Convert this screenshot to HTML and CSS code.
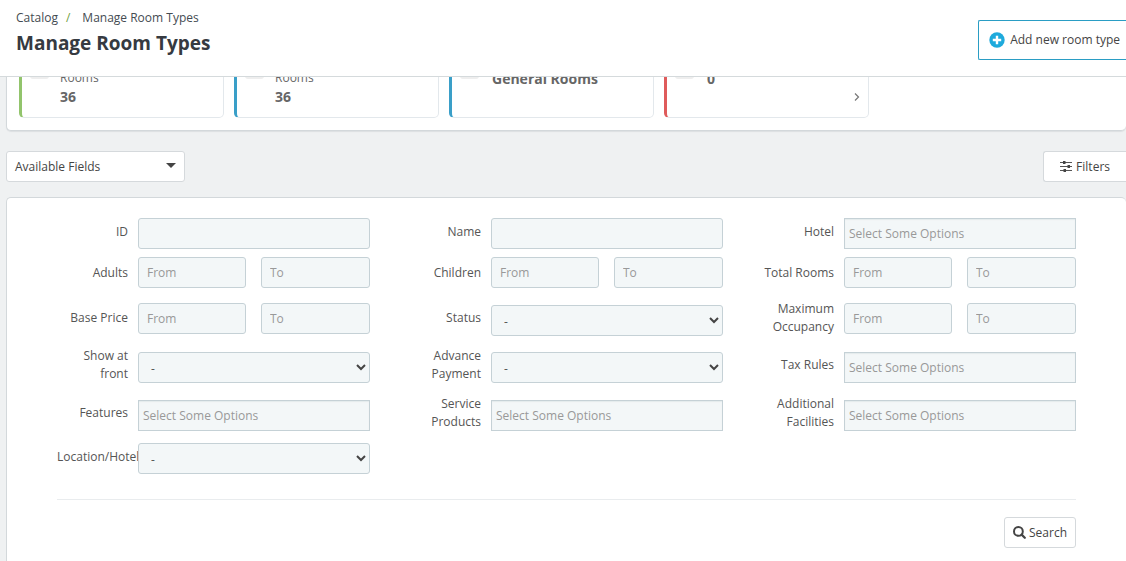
FILE: index.html
```html
<!DOCTYPE html>
<html lang="en">
<head>
<meta charset="utf-8">
<title>Manage Room Types</title>
<link rel="stylesheet" href="styles.css">
</head>
<body>
<header class="page-head">
  <div>
    <nav class="breadcrumb" aria-label="Breadcrumb"><a href="#">Catalog</a><span class="slash">/</span><a href="#">Manage Room Types</a></nav>
    <h1 class="title">Manage Room Types</h1>
  </div>
  <button class="add-btn" type="button">
    <svg width="16" height="16" viewBox="0 0 16 16" aria-hidden="true"><circle cx="8" cy="8" r="7.7" fill="#1eaadc"/><path d="M8 3.8v8.4M3.8 8h8.4" stroke="#fff" stroke-width="2.4"/></svg>
    Add new room type
  </button>
</header>
<main class="content">
  <section class="panel kpis">
    <article class="kpi green"><span class="kpi-icon"></span><div class="kpi-text"><span>Rooms</span><strong>36</strong></div></article>
    <article class="kpi blue"><span class="kpi-icon"></span><div class="kpi-text"><span>Rooms</span><strong>36</strong></div></article>
    <article class="kpi blue"><span class="kpi-icon"></span><div class="kpi-text plain"><strong>General Rooms</strong></div></article>
    <article class="kpi red"><span class="kpi-icon"></span><div class="kpi-text plain"><strong>0</strong></div>
      <svg class="kpi-more" width="6" height="10" viewBox="0 0 6 10" aria-hidden="true"><path d="M1 1.5l3.5 3.5L1 8.5" fill="none" stroke="#777" stroke-width="1.2"/></svg></article>
  </section>

  <div class="toolbar">
    <button class="btn fields-btn" type="button">Available Fields
      <svg class="caret" width="10" height="5" viewBox="0 0 10 5" aria-hidden="true"><path d="M0 0h10L5 5z" fill="#444"/></svg></button>
    <button class="btn filters-btn" type="button">
      <svg width="12" height="12" viewBox="0 0 12 12" aria-hidden="true"><path d="M0 1.5h12M0 5.5h12M0 9.5h12" stroke="#555" stroke-width="1"/><path d="M3 0h2.5v3H3zM7.500 4H10v3H7.500zM3.500 8H6v3H3.500z" fill="#444"/></svg>
      Filters</button>
  </div>

  <form class="panel filters">
    <div class="row">
      <div class="field raised"><label for="id">ID</label><input class="ctl" id="id" type="text"></div>
      <div class="field raised"><label for="name">Name</label><input class="ctl" id="name" type="text"></div>
      <div class="field raised"><label for="hotel">Hotel</label><input class="ctl multi" id="hotel" type="text" placeholder="Select Some Options"></div>
    </div>
    <div class="row">
      <div class="field"><label for="adults">Adults</label><div class="range"><input class="ctl" id="adults" type="text" placeholder="From"><input class="ctl" type="text" placeholder="To" aria-label="Adults to"></div></div>
      <div class="field"><label for="children">Children</label><div class="range"><input class="ctl" id="children" type="text" placeholder="From"><input class="ctl" type="text" placeholder="To" aria-label="Children to"></div></div>
      <div class="field"><label for="rooms">Total Rooms</label><div class="range"><input class="ctl" id="rooms" type="text" placeholder="From"><input class="ctl" type="text" placeholder="To" aria-label="Total rooms to"></div></div>
    </div>
    <div class="row spaced">
      <div class="field"><label for="price">Base Price</label><div class="range"><input class="ctl" id="price" type="text" placeholder="From"><input class="ctl" type="text" placeholder="To" aria-label="Base price to"></div></div>
      <div class="field low"><label for="status">Status</label><select class="ctl" id="status"><option>-</option></select></div>
      <div class="field"><label for="occupancy">Maximum Occupancy</label><div class="range"><input class="ctl" id="occupancy" type="text" placeholder="From"><input class="ctl" type="text" placeholder="To" aria-label="Maximum occupancy to"></div></div>
    </div>
    <div class="row spaced">
      <div class="field raised"><label for="front">Show at front</label><select class="ctl" id="front"><option>-</option></select></div>
      <div class="field raised"><label for="advance">Advance Payment</label><select class="ctl" id="advance"><option>-</option></select></div>
      <div class="field raised"><label for="tax">Tax Rules</label><input class="ctl multi" id="tax" type="text" placeholder="Select Some Options"></div>
    </div>
    <div class="row">
      <div class="field raised"><label for="features">Features</label><input class="ctl multi" id="features" type="text" placeholder="Select Some Options"></div>
      <div class="field raised"><label for="products">Service Products</label><input class="ctl multi" id="products" type="text" placeholder="Select Some Options"></div>
      <div class="field raised"><label for="facilities">Additional Facilities</label><input class="ctl multi" id="facilities" type="text" placeholder="Select Some Options"></div>
    </div>
    <div class="row">
      <div class="field raised wide-label"><label for="location">Location/Hotel</label><select class="ctl" id="location"><option>-</option></select></div>
    </div>
    <div class="actions">
      <button class="btn search-btn" type="button">
        <svg width="13" height="13" viewBox="0 0 13 13" aria-hidden="true"><circle cx="5.4" cy="5.4" r="4.400" fill="none" stroke="#444" stroke-width="2"/><path d="M8.600 8.600l3.200 3.200" stroke="#444" stroke-width="2.200" stroke-linecap="round"/></svg>
        Search</button>
    </div>
  </form>
</main>
</body>
</html>
```
FILE: styles.css
```css
* { box-sizing: border-box; }

body {
  display: flex;
  flex-direction: column;
  min-height: 100vh;
  margin: 0;
  background: #eff1f2;
  color: #555;
  font: 12px/18px "Open Sans", "Noto Sans", sans-serif;
}

button, input, select { font: inherit; color: inherit; }

.page-head {
  position: sticky;
  top: 0;
  z-index: 2;
  display: flex;
  flex-shrink: 0;
  justify-content: space-between;
  align-items: flex-start;
  height: 77px;
  padding: 9px 0 0 16px;
  background: #fff;
  border-bottom: 1px solid #d5dadc;
}

.breadcrumb a { color: #444b52; text-decoration: none; }
.breadcrumb .slash { margin: 0 12px 0 8px; color: #72a143; }

.title {
  margin: 3px 0 0;
  color: #363a41;
  font-size: 19px;
  line-height: 26px;
  font-weight: 700;
}

.add-btn {
  display: flex;
  align-items: center;
  gap: 5px;
  height: 40px;
  margin-top: 11px;
  padding: 0 6px 0 10px;
  background: #fff;
  border: 1px solid #2a9dc4;
  border-right: 0;
  border-radius: 2px 0 0 2px;
  color: #444;
}

.content {
  display: flex;
  flex: 1;
  flex-direction: column;
  padding-left: 6px;
}

.panel {
  background: #fff;
  border: 1px solid #d3d8db;
  border-right: 0;
  border-radius: 5px;
}

.kpis {
  display: flex;
  gap: 10px;
  margin-top: -36px;
  padding: 12px;
  box-shadow: 0 1px 1px #dcdfe1;
}

.kpi {
  display: flex;
  flex: 0 0 205px;
  gap: 11px;
  height: 64px;
  padding: 14px 8px 0;
  border: 1px solid #e3e8ec;
  border-left-width: 3px;
  border-radius: 5px;
}
.kpi.green { border-left-color: #92c46c; }
.kpi.blue { border-left-color: #3a9fc8; }
.kpi.red { border-left-color: #df5b5b; }

.kpi-icon { width: 19px; height: 10px; background: #eee; border-radius: 3px; }
.kpi-text { display: flex; flex: 1; flex-direction: column; color: #666; }
.kpi-text.plain { padding-left: 2px; }
.kpi-text strong { font-size: 14px; line-height: 19px; }
.kpi-more { align-self: flex-end; margin-bottom: 15px; }

.toolbar {
  display: flex;
  justify-content: space-between;
  padding: 20px 0 15px;
}

.btn {
  display: flex;
  align-items: center;
  gap: 4px;
  height: 31px;
  padding: 0 8px;
  background: #fff;
  border: 1px solid #d5d9dc;
  border-radius: 3px;
  color: #444;
}
.search-btn { gap: 3px; }
.fields-btn { justify-content: space-between; width: 179px; }
.caret { margin-bottom: 2px; }
.filters-btn { padding: 0 16px; border-right: 0; border-radius: 3px 0 0 3px; }

.filters {
  flex: 1;
  padding: 20px 50px 12px;
  border-bottom: 0;
  border-radius: 5px 5px 0 0;
}

.row {
  display: grid;
  grid-template-columns: repeat(3, minmax(0, 1fr));
  gap: 40px;
  margin-bottom: 8px;
}
.row.spaced { margin-top: 12px; }
.row.spaced + .row.spaced { margin-top: 11px; }

.field {
  display: grid;
  grid-template-columns: 71px minmax(0, 1fr);
  gap: 10px;
  align-items: center;
}
.field label { text-align: right; }
.field.raised label { padding-bottom: 4px; }
.field.low { align-items: end; }
.field.low label { padding-bottom: 9px; }
.wide-label label { white-space: nowrap; text-align: left; }

.range {
  display: grid;
  grid-template-columns: minmax(0, 108fr) minmax(0, 109fr);
  gap: 15px;
}

.ctl {
  width: 100%;
  height: 31px;
  padding: 0 8px;
  background-color: #f3f7f8;
  border: 1px solid #c5d1d6;
  border-radius: 3px;
}
.ctl::placeholder { color: #999; opacity: 1; }
.ctl.multi { padding: 0 4px; border-radius: 0; box-shadow: inset 0 1px 1px #e4eaec; }

select.ctl {
  appearance: none;
  padding: 3px 12px 0;
  background-image: url("data:image/svg+xml,%3Csvg xmlns='http://www.w3.org/2000/svg' width='10' height='7' viewBox='0 0 10 7'%3E%3Cpath d='M1 1l4 4 4-4' fill='none' stroke='%23444' stroke-width='2'/%3E%3C/svg%3E");
  background-repeat: no-repeat;
  background-position: right 3px center;
}

.actions {
  display: flex;
  justify-content: flex-end;
  margin-top: 25px;
  padding-top: 17px;
  border-top: 1px solid #e9ecee;
}
```
